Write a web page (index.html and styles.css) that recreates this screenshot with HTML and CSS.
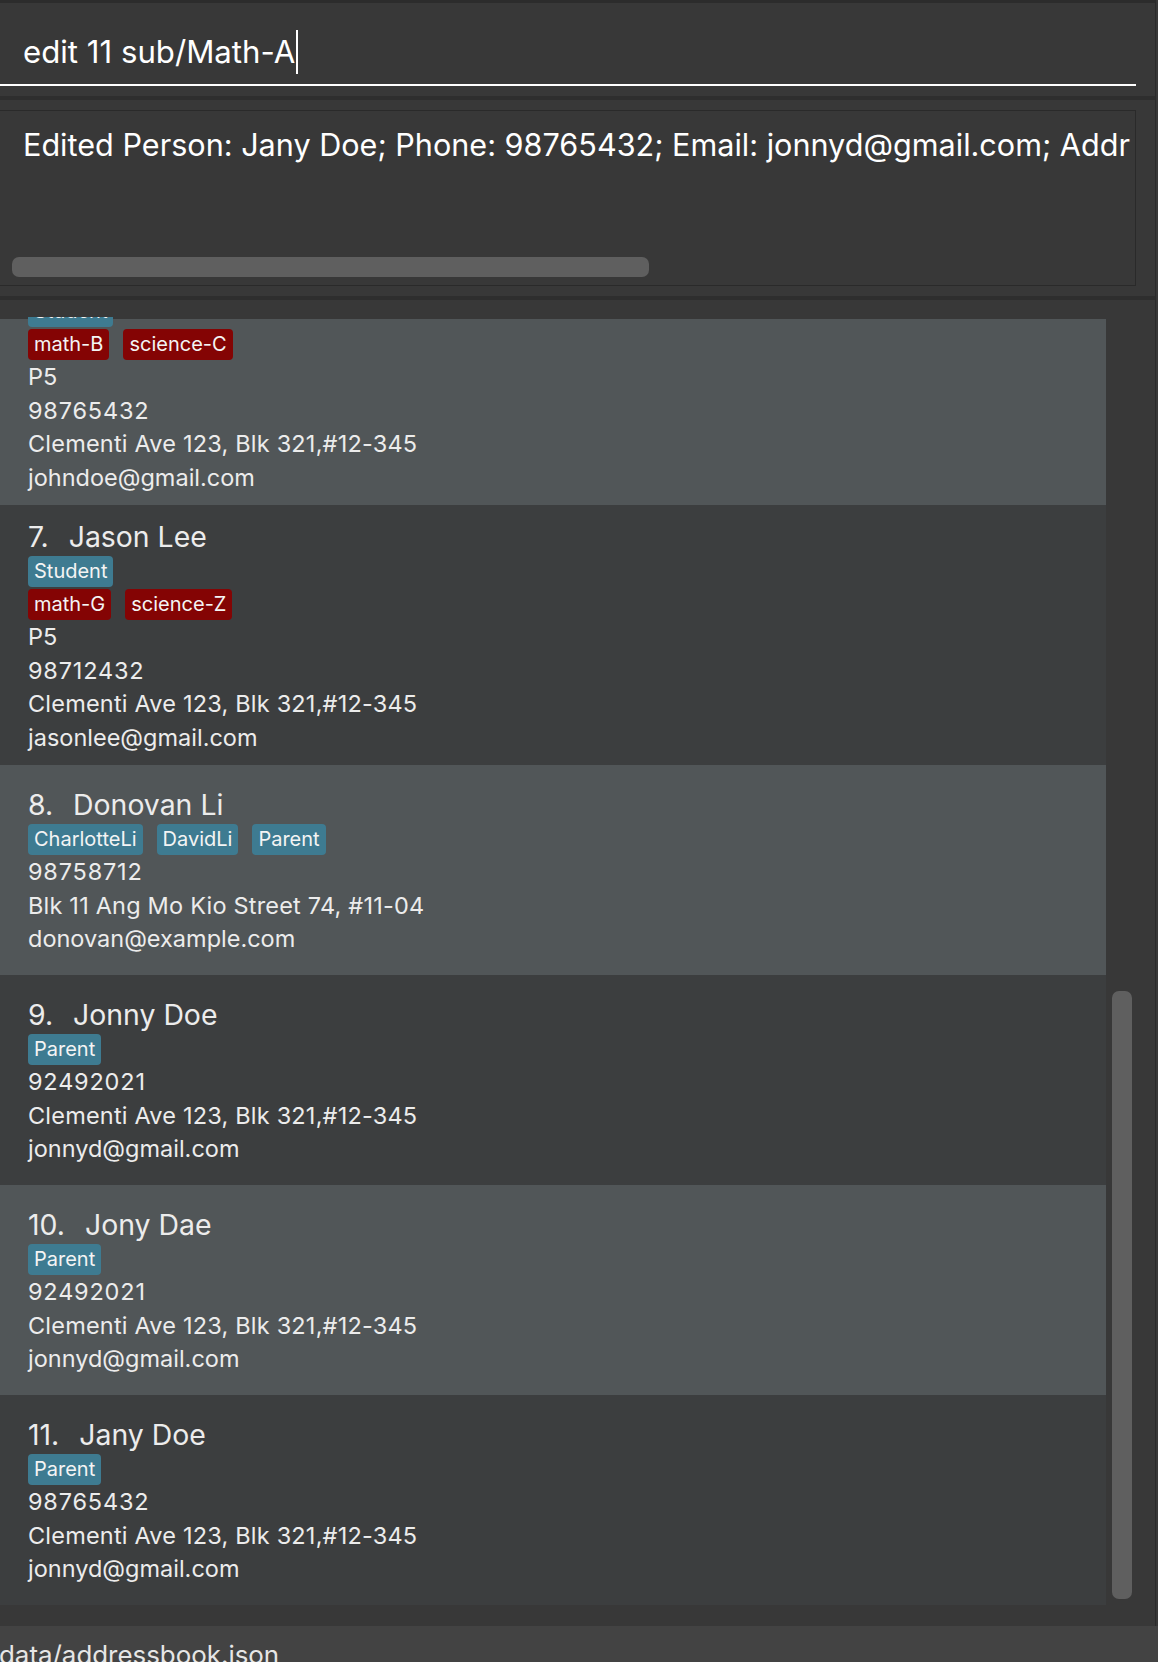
FILE: index.html
```html
<!DOCTYPE html>
<html lang="en">
<head>
<meta charset="utf-8">
<title>Address Book</title>
<link rel="stylesheet" href="styles.css">
</head>
<body>
<div class="app">
  <div class="upper">
    <div class="command"><span class="cmd-text">edit 11 sub/Math-A</span><span class="caret"></span></div>
    <div class="gap10"></div>
    <div class="divider"></div>
    <div class="result-wrap">
      <div class="result-box">
        <div class="result-text">Edited Person: Jany Doe; Phone: 98765432; Email: jonnyd@gmail.com; Addr</div>
        <div class="hthumb"></div>
      </div>
    </div>
    <div class="divider"></div>
    <div class="list-area">
      <div class="viewport">
        <div class="cards">
          <div class="card odd first">
            <div class="tags"><span class="tag">Student</span></div>
            <div class="tags"><span class="tag sub">math-B</span><span class="tag sub">science-C</span></div>
            <div class="field">P5</div>
            <div class="field phone">98765432</div>
            <div class="field addr">Clementi Ave 123, Blk 321,#12-345</div>
            <div class="field">johndoe@gmail.com</div>
          </div>
          <div class="card even">
            <div class="name"><span class="idx">7.</span>Jason Lee</div>
            <div class="tags"><span class="tag">Student</span></div>
            <div class="tags"><span class="tag sub">math-G</span><span class="tag sub">science-Z</span></div>
            <div class="field">P5</div>
            <div class="field phone">98712432</div>
            <div class="field addr">Clementi Ave 123, Blk 321,#12-345</div>
            <div class="field">jasonlee@gmail.com</div>
          </div>
          <div class="card odd">
            <div class="name"><span class="idx">8.</span>Donovan Li</div>
            <div class="tags"><span class="tag">CharlotteLi</span><span class="tag">DavidLi</span><span class="tag">Parent</span></div>
            <div class="field phone">98758712</div>
            <div class="field addr">Blk 11 Ang Mo Kio Street 74, #11-04</div>
            <div class="field">donovan@example.com</div>
          </div>
          <div class="card even">
            <div class="name"><span class="idx">9.</span>Jonny Doe</div>
            <div class="tags"><span class="tag">Parent</span></div>
            <div class="field phone">92492021</div>
            <div class="field addr">Clementi Ave 123, Blk 321,#12-345</div>
            <div class="field">jonnyd@gmail.com</div>
          </div>
          <div class="card odd">
            <div class="name"><span class="idx">10.</span>Jony Dae</div>
            <div class="tags"><span class="tag">Parent</span></div>
            <div class="field phone">92492021</div>
            <div class="field addr">Clementi Ave 123, Blk 321,#12-345</div>
            <div class="field">jonnyd@gmail.com</div>
          </div>
          <div class="card even">
            <div class="name"><span class="idx">11.</span>Jany Doe</div>
            <div class="tags"><span class="tag">Parent</span></div>
            <div class="field phone">98765432</div>
            <div class="field addr">Clementi Ave 123, Blk 321,#12-345</div>
            <div class="field">jonnyd@gmail.com</div>
          </div>
        </div>
        <div class="vscroll"><div class="vthumb"></div></div>
      </div>
    </div>
  </div>
  <div class="status-line"></div>
  <div class="status-bar">data/addressbook.json</div>
</div>
</body>
</html>
```
FILE: styles.css
```css
* {
  box-sizing: border-box;
  margin: 0;
  padding: 0;
}

html,
body {
  width: 1158px;
  height: 1662px;
  overflow: hidden;
}

body {
  background: #383838;
  font-family: Inter, "Noto Sans", sans-serif;
  color: #ffffff;
}

.app {
  display: flex;
  flex-direction: column;
  height: 1662px;
}

.upper {
  flex: none;
  width: 1156px;
  border-top: 3px solid #2c2c2c;
  border-right: 1px solid #2b2b2b;
  display: flex;
  flex-direction: column;
}

.command {
  height: 83px;
  width: 1136px;
  border-bottom: 2px solid #ffffff;
  padding: 27px 0 0 23px;
  font-size: 31.2px;
  line-height: 40px;
  white-space: nowrap;
  color: #ffffff;
}

.caret {
  display: inline-block;
  width: 2px;
  height: 44px;
  background: #ffffff;
  vertical-align: -11px;
  margin-left: 1px;
}

.gap10 {
  height: 10px;
}

.divider {
  height: 4px;
  background: #2e2e2e;
}

.result-wrap {
  padding: 10px 0;
}

.result-box {
  width: 1136px;
  height: 176px;
  border: 1.5px solid #2a2a2a;
  border-left: none;
  display: flex;
  flex-direction: column;
  justify-content: space-between;
  padding: 15px 0 8.5px 0;
  overflow: hidden;
}

.result-text {
  padding-left: 23px;
  font-size: 30.6px;
  line-height: 38px;
  white-space: nowrap;
  color: #ffffff;
}

.hthumb {
  margin-left: 12px;
  width: 637px;
  height: 20px;
  border-radius: 7px;
  background: #5f5f5f;
}

.list-area {
  padding: 17px 0 20px 0;
}

.viewport {
  height: 1289px;
  overflow: hidden;
  display: flex;
}

.cards {
  width: 1106px;
  margin-top: -33px;
  display: flex;
  flex-direction: column;
}

.card {
  min-height: 210px;
  display: flex;
  flex-direction: column;
  justify-content: center;
  padding: 13px 0 11px 28px;
  color: #ececec;
}

.card.odd {
  background: #515658;
}

.card.even {
  background: #3c3e3f;
}

.card.first {
  min-height: 0;
  padding-top: 12px;
  background: linear-gradient(to bottom, #383838 0, #383838 35px, #515658 35px);
}

.name {
  font-size: 28.4px;
  line-height: 38px;
  white-space: nowrap;
}

.idx {
  margin-right: 20px;
}

.tags {
  display: flex;
  gap: 14px;
}

.tags + .tags {
  margin-top: 2px;
}

.tag {
  height: 31px;
  line-height: 31px;
  padding: 0 6px;
  font-size: 20px;
  border-radius: 4px;
  background: #3e7b91;
  color: #f4f4f4;
  white-space: nowrap;
}

.tag.sub {
  background: #840404;
}

.field {
  font-size: 23.5px;
  line-height: 33.5px;
  white-space: nowrap;
}

.field.phone {
  letter-spacing: 0.8px;
}

.field.addr {
  letter-spacing: 0.2px;
}

.vscroll {
  width: 49px;
  flex: none;
}

.vthumb {
  margin: 674px 0 0 6px;
  width: 20px;
  height: 608px;
  border-radius: 7px;
  background: #5f5f5f;
}

.status-line {
  height: 2px;
  background: #2b2b2b;
}

.status-bar {
  flex: 1;
  background: #434343;
  padding: 12px 0 0 0;
  margin-left: -1px;
  font-size: 25.9px;
  line-height: 34px;
  color: #e6e6e6;
  white-space: nowrap;
}
```
